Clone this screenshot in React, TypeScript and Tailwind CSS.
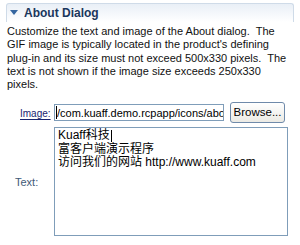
const desc = [
  "Customize the text and image of the About dialog.  The",
  "GIF image is typically located in the product's defining",
  "plug-in and its size must not exceed 500x330 pixels.  The",
  "text is not shown if the image size exceeds 250x330",
  "pixels.",
];

const aboutLines = ["Kuaff科技", "富客户端演示程序", "访问我们的网站 http://www.kuaff.com"];

export default function App() {
  return (
    <div
      className="w-[300px] h-[245px] overflow-hidden bg-white text-[11px] text-black"
      style={{ fontFamily: '"Liberation Sans", "Noto Sans CJK SC", sans-serif' }}
    >
      {/* Section title bar */}
      <div className="mx-[6px] mt-[3px] h-[19px] rounded-t-[3px] border border-b-0 border-[#cfdbe8] bg-gradient-to-b from-[#e9eff6] to-white flex items-center pl-[3px]">
        <svg width="9" height="6" viewBox="0 0 9 6" className="mr-[5px]">
          <path d="M0 0 H8 L4 5 Z" fill="#3566a0" />
        </svg>
        <span className="text-[12px] font-bold text-[#1b365c] leading-none">About Dialog</span>
      </div>

      {/* Description */}
      <div className="pl-[7px] pt-[3px] leading-[13.3px] whitespace-pre text-[#111]">
        {desc.map((l) => (
          <div key={l}>{l}</div>
        ))}
      </div>

      {/* Image row */}
      <div className="mt-[11px] flex items-center">
        <div className="w-[54px] shrink-0 pl-[20px]">
          <a className="text-[10px] text-[#1a2470] underline underline-offset-2">Image:</a>
        </div>
        <div className="w-[170px] h-[17px] shrink-0 border border-[#7f9db9] bg-white flex items-center overflow-hidden whitespace-pre">
          <span className="w-px h-[13px] bg-black ml-px shrink-0" />
          <span className="text-[11px]">/com.kuaff.demo.rcpapp/icons/abo</span>
        </div>
        <button className="ml-[6px] w-[55px] h-[21px] shrink-0 rounded-[3px] border border-[#6f8aaa] bg-gradient-to-b from-white to-[#ebeae4] text-[11.5px] leading-none">
          Browse...
        </button>
      </div>

      {/* Text row */}
      <div className="mt-[4px] flex items-center">
        <span className="ml-[15px] w-[39px] shrink-0 text-[#3f5a78]">Text:</span>
        <div className="w-[234px] h-[109px] shrink-0 border border-[#7f9db9] bg-white pl-[3px] pt-[1px] text-[12px] leading-[13.5px]">
          {aboutLines.map((l, i) => (
            <div key={l} className="flex items-center">
              {l}
              {i === 0 && <span className="w-px h-[12px] bg-black ml-px" />}
            </div>
          ))}
        </div>
      </div>
    </div>
  );
}
